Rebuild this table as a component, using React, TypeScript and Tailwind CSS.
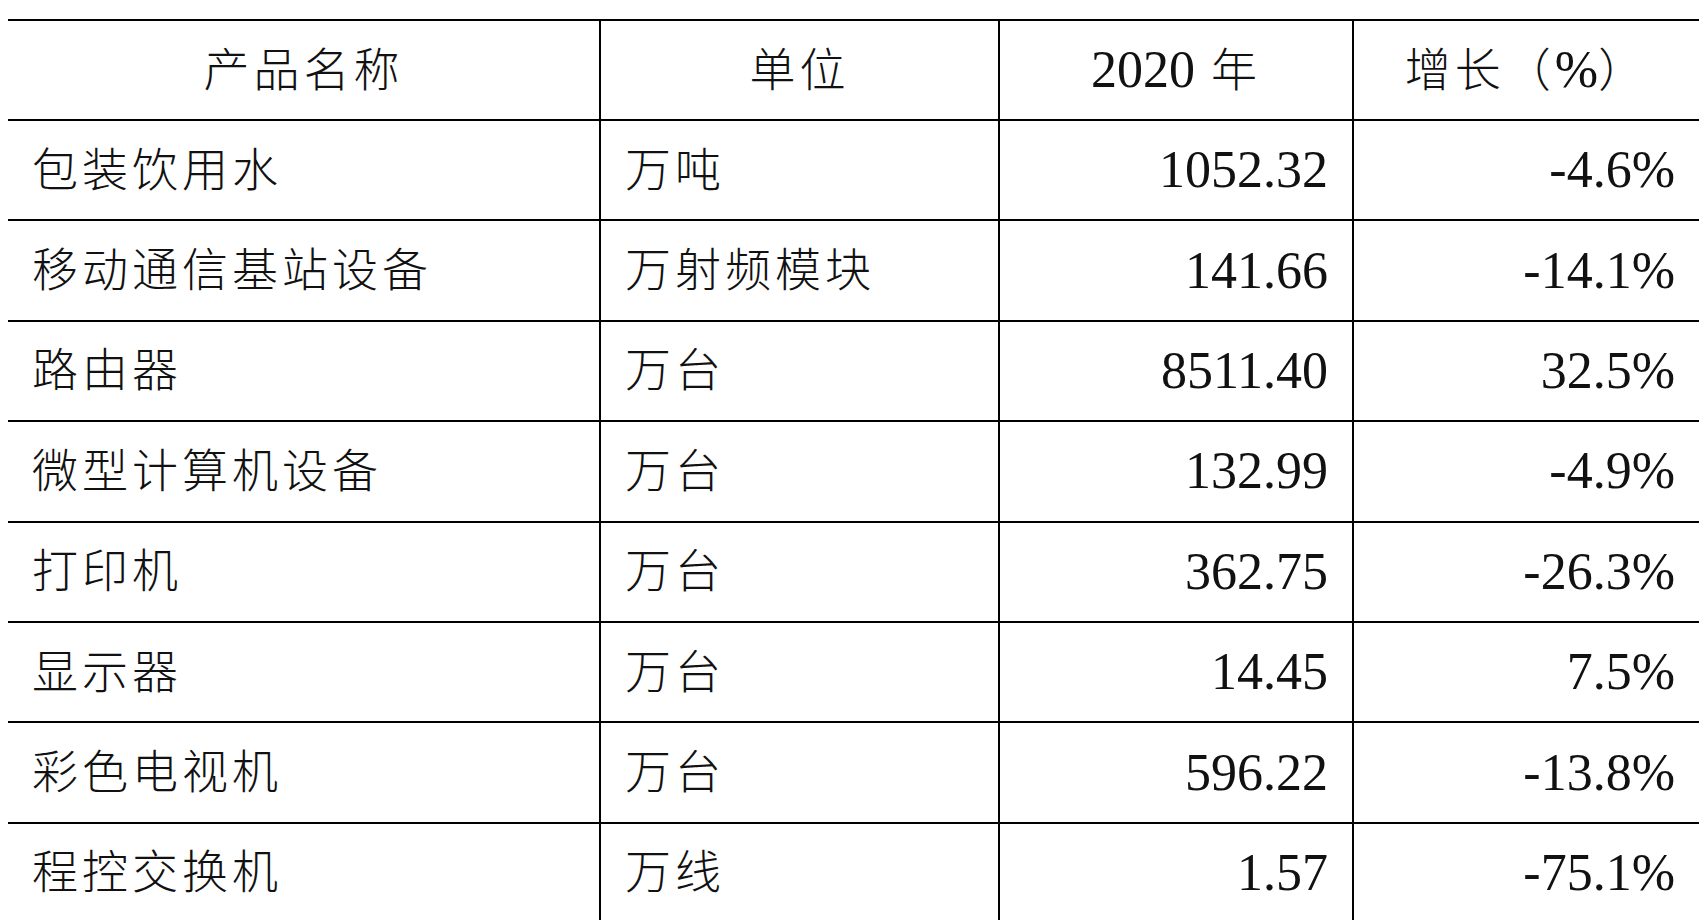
type Row = {
  name: string;
  unit: string;
  output: string;
  growth: string;
};

const ROWS: Row[] = [
  { name: "包装饮用水", unit: "万吨", output: "1052.32", growth: "-4.6%" },
  { name: "移动通信基站设备", unit: "万射频模块", output: "141.66", growth: "-14.1%" },
  { name: "路由器", unit: "万台", output: "8511.40", growth: "32.5%" },
  { name: "微型计算机设备", unit: "万台", output: "132.99", growth: "-4.9%" },
  { name: "打印机", unit: "万台", output: "362.75", growth: "-26.3%" },
  { name: "显示器", unit: "万台", output: "14.45", growth: "7.5%" },
  { name: "彩色电视机", unit: "万台", output: "596.22", growth: "-13.8%" },
  { name: "程控交换机", unit: "万线", output: "1.57", growth: "-75.1%" },
];

const GRID = "grid grid-cols-[591px_399px_354px_347px] border-t-2 border-black";
const CJK = "text-[46px] font-light tracking-[4px]";
const NUM = "text-[52px] tracking-normal";

export default function App() {
  return (
    <div className="min-h-screen bg-white pl-2 pt-[19px] font-['Liberation_Serif','Noto_Sans_CJK_SC',serif] text-[#111] overflow-hidden">
      <div className="w-[1691px]">
        <div className={`${GRID} h-[100px]`}>
          <div className={`flex items-center justify-center ${CJK}`}>产品名称</div>
          <div className={`flex items-center justify-center border-l-2 border-black ${CJK}`}>单位</div>
          <div className={`flex items-center justify-center border-l-2 border-black ${CJK}`}>
            <span className={NUM}>2020</span>
            <span className="ml-4">年</span>
          </div>
          <div className={`flex items-center justify-center border-l-2 border-black ${CJK}`}>
            <span>增长（</span>
            <span className={NUM}>%</span>
            <span>）</span>
          </div>
        </div>

        {ROWS.map((row) => (
          <div key={row.name} className={`${GRID} h-[100.4px]`}>
            <div className={`flex items-center pl-6 ${CJK}`}>{row.name}</div>
            <div className={`flex items-center border-l-2 border-black pl-6 ${CJK}`}>
              {row.unit}
            </div>
            <div className={`flex items-center justify-end border-l-2 border-black pr-6 ${NUM}`}>
              {row.output}
            </div>
            <div className={`flex items-center justify-end border-l-2 border-black pr-6 ${NUM}`}>
              {row.growth}
            </div>
          </div>
        ))}
      </div>
    </div>
  );
}
